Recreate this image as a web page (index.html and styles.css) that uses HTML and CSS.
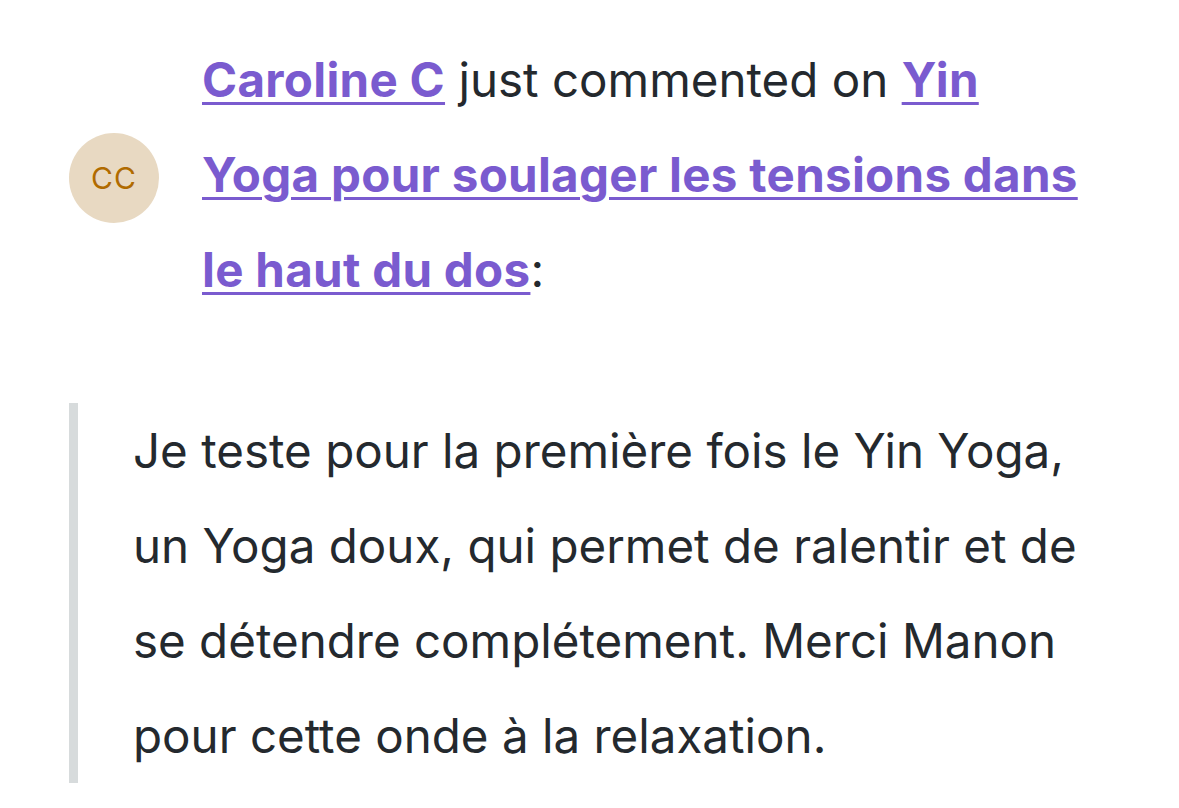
FILE: index.html
```html
<!DOCTYPE html>
<html>
<head>
<meta charset="utf-8">
<link rel="stylesheet" href="styles.css">
</head>
<body>
<div class="page">
  <div class="activity">
    <div class="avatar">CC</div>
    <p class="headline"><a class="link" href="#">Caroline C</a> just commented on <a class="link" href="#">Yin Yoga pour soulager les tensions dans le haut du dos</a>:</p>
  </div>
  <blockquote class="quote">
    <p>Je teste pour la première fois le Yin Yoga, un Yoga doux, qui permet de ralentir et de se détendre complétement. Merci Manon pour cette onde à la relaxation.</p>
  </blockquote>
</div>
</body>
</html>
```

FILE: styles.css
```css
html, body {
  margin: 0;
  padding: 0;
  background: #ffffff;
}
.page {
  padding: 32px 0 0 69px;
  font-family: Inter, "Noto Sans", sans-serif;
  color: #24292e;
  font-size: 47.5px;
  line-height: 95px;
}
.activity {
  display: flex;
  align-items: center;
  gap: 43px;
}
.avatar {
  flex: 0 0 90px;
  width: 90px;
  height: 90px;
  margin-top: 6px;
  border-radius: 50%;
  background: #e8d9c2;
  color: #b06b00;
  font-size: 30px;
  line-height: 90px;
  text-align: center;
  letter-spacing: 1px;
}
.headline {
  margin: 0;
  width: 888px;
}
.link {
  font-weight: 700;
  color: #7a5bcf;
  letter-spacing: 0.3px;
  text-decoration: underline;
  text-decoration-thickness: 3px;
  text-underline-offset: 5px;
}
.quote {
  margin: 86px 0 0 0;
  border-left: 9px solid #d7dbdc;
  padding-left: 55px;
  width: 970px;
}
.quote p {
  margin: 0;
}
```
